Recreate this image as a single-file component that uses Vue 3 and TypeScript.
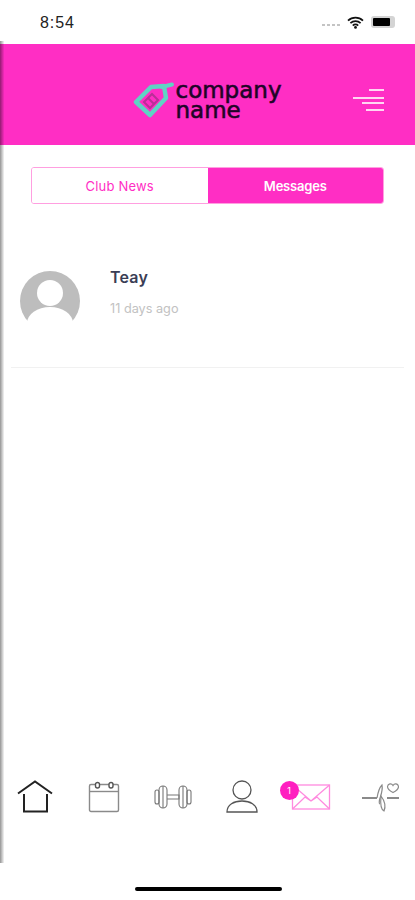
<script setup lang="ts">
import { ref } from 'vue';

const tabs = ['Club News', 'Messages'];
const activeTab = ref('Messages');
</script>

<template>
  <div class="screen">
    <div class="edge-shadow"></div>

    <div class="status-bar">
      <span class="time">8:54</span>
      <div class="status-icons">
        <span class="signal"><i></i><i></i><i></i><i></i></span>
        <svg class="wifi" width="17" height="13" viewBox="0 0 17 13">
          <path d="M1 4.6a10.8 10.8 0 0 1 15 0M3.4 7.2a7.3 7.3 0 0 1 10.2 0M5.8 9.6a3.8 3.8 0 0 1 5.4 0" fill="none" stroke="#111" stroke-width="1.7" />
          <circle cx="8.5" cy="11.4" r="1.4" fill="#111" />
        </svg>
        <span class="battery"><i></i></span>
      </div>
    </div>

    <header class="top-bar">
      <div class="logo">
        <svg width="42" height="38" viewBox="0 0 42 38">
          <path d="M3 21 L18 6 L31 5 L33 17 L17 34 Z" fill="none" stroke="#5fd3c4" stroke-width="4.5" stroke-linejoin="round" />
          <path d="M11 21 L19 13 L25 19 L17 27 Z M15 17 L21 23" fill="none" stroke="#b92f96" stroke-width="2" />
          <path d="M29 6 L39 3.5" stroke="#5fd3c4" stroke-width="4" stroke-linecap="round" />
        </svg>
        <div class="logo-text">company<br />name</div>
      </div>
      <svg class="menu" width="32" height="25" viewBox="0 0 32 25">
        <path d="M16 1H31M0 9H31M9 14H31M13 21H31" stroke="#ffd6f2" stroke-width="1.8" />
      </svg>
    </header>

    <div class="tabs">
      <button
        v-for="tab in tabs"
        :key="tab"
        class="tab"
        :class="{ active: tab === activeTab }"
        @click="activeTab = tab"
      >
        {{ tab }}
      </button>
    </div>

    <div class="message-row">
      <svg class="avatar" width="60" height="60" viewBox="0 0 60 60">
        <circle cx="30" cy="30" r="30" fill="#bdbdbd" />
        <circle cx="30" cy="22" r="13" fill="#fff" />
        <ellipse cx="30" cy="52" rx="23" ry="16" fill="#fff" />
        <rect x="0" y="51" width="60" height="9" fill="#fff" />
      </svg>
      <div class="message-info">
        <div class="name">Teay</div>
        <div class="ago">11 days ago</div>
      </div>
    </div>

    <nav class="bottom-nav">
      <div class="nav-item">
        <svg width="36" height="34" viewBox="0 0 36 34" fill="none" stroke="#222" stroke-width="2">
          <path d="M1 13.5 L18 1.5 L35 13.5" />
          <path d="M7 14 V31.5 H30 V14" />
        </svg>
      </div>
      <div class="nav-item">
        <svg width="32" height="32" viewBox="0 0 32 32" fill="none" stroke="#8a8a8a" stroke-width="1.4">
          <rect x="1.5" y="3.5" width="29" height="27" rx="1.5" />
          <path d="M1.5 10.5H30.5" />
          <rect x="7.5" y="1.5" width="4" height="5.5" rx="2" fill="#fff" stroke="#555" />
          <rect x="21" y="1.5" width="4" height="5.5" rx="2" fill="#fff" stroke="#555" />
        </svg>
      </div>
      <div class="nav-item">
        <svg width="38" height="26" viewBox="0 0 38 26" fill="none" stroke="#777" stroke-width="1.1">
          <rect x="1" y="6" width="4" height="14" rx="2" />
          <rect x="5" y="2" width="8" height="22" rx="4" />
          <path d="M9 2V24M29 2V24" />
          <path d="M13 11H25V15H13" />
          <rect x="25" y="2" width="8" height="22" rx="4" />
          <rect x="33" y="6" width="4" height="14" rx="2" />
        </svg>
      </div>
      <div class="nav-item">
        <svg width="32" height="34" viewBox="0 0 32 34" fill="none" stroke="#555" stroke-width="1.3">
          <circle cx="16" cy="10" r="9" />
          <path d="M1 32 C1 24.5 8 21 16 21 C24 21 31 24.5 31 32 Z" />
        </svg>
      </div>
      <div class="nav-item mail">
        <svg width="40" height="26" viewBox="0 0 40 26" fill="none" stroke="#ff8adf" stroke-width="1.3">
          <rect x="1.5" y="1" width="37" height="24" />
          <path d="M1.5 25 L14 13 L20 17 L26 13 L38.5 25 M1.5 1 L20 17 L38.5 1" />
        </svg>
        <span class="badge">1</span>
      </div>
      <div class="nav-item">
        <svg width="38" height="30" viewBox="0 0 38 30" fill="none" stroke="#8a8a8a" stroke-width="1.2">
          <path d="M1 16H16M26 16H38" stroke-width="2" />
          <path d="M16 16 C17 10 19 5 21 3 C22 8 20 13 19 16 C18 19 18 22 19 22" />
          <path d="M20 14 C23 18 25 24 23 29 C21 28 19 24 20 14 Z" />
          <path d="M26.5 4.5 C27 1.5 30.5 1 32 3.5 C33.5 1 37 1.5 37.5 4.5 C37.5 7 34 9.5 32 10.5 C30 9.5 26.5 7 26.5 4.5 Z" />
        </svg>
      </div>
    </nav>

    <div class="home-indicator"></div>
  </div>
</template>

<style scoped>
.screen {
  position: relative;
  display: flex;
  flex-direction: column;
  width: 415px;
  height: 900px;
  overflow: hidden;
  background: #fff;
  font-family: Inter, "Liberation Sans", sans-serif;
}

.edge-shadow {
  position: absolute;
  z-index: 2;
  top: 41px;
  left: 0;
  bottom: 37px;
  width: 4px;
  background: linear-gradient(to right, rgba(0, 0, 0, 0.42), rgba(0, 0, 0, 0.04));
}

.status-bar {
  display: flex;
  justify-content: space-between;
  align-items: center;
  height: 44px;
  padding: 0 20px 0 40px;
  box-sizing: border-box;
}

.time {
  margin-top: 2px;
  font-family: "Liberation Sans", sans-serif;
  font-size: 16px;
  letter-spacing: 0.9px;
  color: #222;
}

.status-icons {
  display: flex;
  align-items: center;
  gap: 7px;
}

.signal {
  display: flex;
  gap: 2px;
  margin-top: 5px;
}

.signal i {
  width: 3px;
  height: 2px;
  background: #c4c4c4;
}

.battery {
  position: relative;
  display: block;
  width: 24px;
  height: 12px;
  padding: 2px 5px 2px 2px;
  box-sizing: border-box;
  border-radius: 3px;
  background: #d4d4d4;
}

.battery i {
  display: block;
  height: 100%;
  border-radius: 1px;
  background: #000;
}

.top-bar {
  position: relative;
  display: flex;
  justify-content: center;
  align-items: center;
  height: 101px;
  background: #ff2ec4;
}

.logo {
  display: flex;
  align-items: center;
  margin-top: 11px;
}

.logo-text {
  font-family: "DejaVu Sans", sans-serif;
  font-size: 23px;
  line-height: 20px;
  color: #1f0428;
  -webkit-text-stroke: 0.6px #1f0428;
}

.menu {
  position: absolute;
  top: 45px;
  right: 30px;
}

.tabs {
  display: flex;
  height: 37px;
  margin: 22px 31px 0;
  box-sizing: border-box;
  border: 1px solid #ff9fe0;
  border-radius: 3px;
  overflow: hidden;
}

.tab {
  flex: 1;
  padding: 0;
  border: none;
  background: #fff;
  color: #ff2ec4;
  font-family: inherit;
  font-size: 13px;
  letter-spacing: 0.2px;
}

.tab.active {
  background: #ff2ec4;
  color: #fff;
  font-size: 13px;
  font-weight: 600;
  letter-spacing: -0.2px;
}

.message-row {
  display: flex;
  align-items: flex-start;
  height: 164px;
  margin: 0 11px;
  padding: 63px 9px 0;
  box-sizing: border-box;
  border-bottom: 1px solid #f1f1f1;
}

.avatar {
  margin-top: 4px;
  flex-shrink: 0;
}

.message-info {
  margin-left: 30px;
}

.name {
  font-size: 16px;
  font-weight: 600;
  line-height: 20px;
  letter-spacing: 0.2px;
  color: #3a3d55;
}

.ago {
  margin-top: 14px;
  font-size: 12.7px;
  line-height: 16px;
  color: #c2c2c2;
}

.bottom-nav {
  display: grid;
  grid-template-columns: repeat(6, 1fr);
  align-items: center;
  height: 40px;
  margin-top: auto;
  margin-bottom: 83px;
}

.nav-item {
  position: relative;
  display: flex;
  justify-content: center;
  align-items: center;
}

.badge {
  position: absolute;
  top: -3px;
  left: 3px;
  width: 19px;
  height: 19px;
  border-radius: 50%;
  background: #ff1fc0;
  color: #fff;
  font-size: 9px;
  line-height: 19px;
  text-align: center;
}

.home-indicator {
  position: absolute;
  left: 135px;
  bottom: 9px;
  width: 147px;
  height: 4px;
  border-radius: 2px;
  background: #000;
}
</style>
